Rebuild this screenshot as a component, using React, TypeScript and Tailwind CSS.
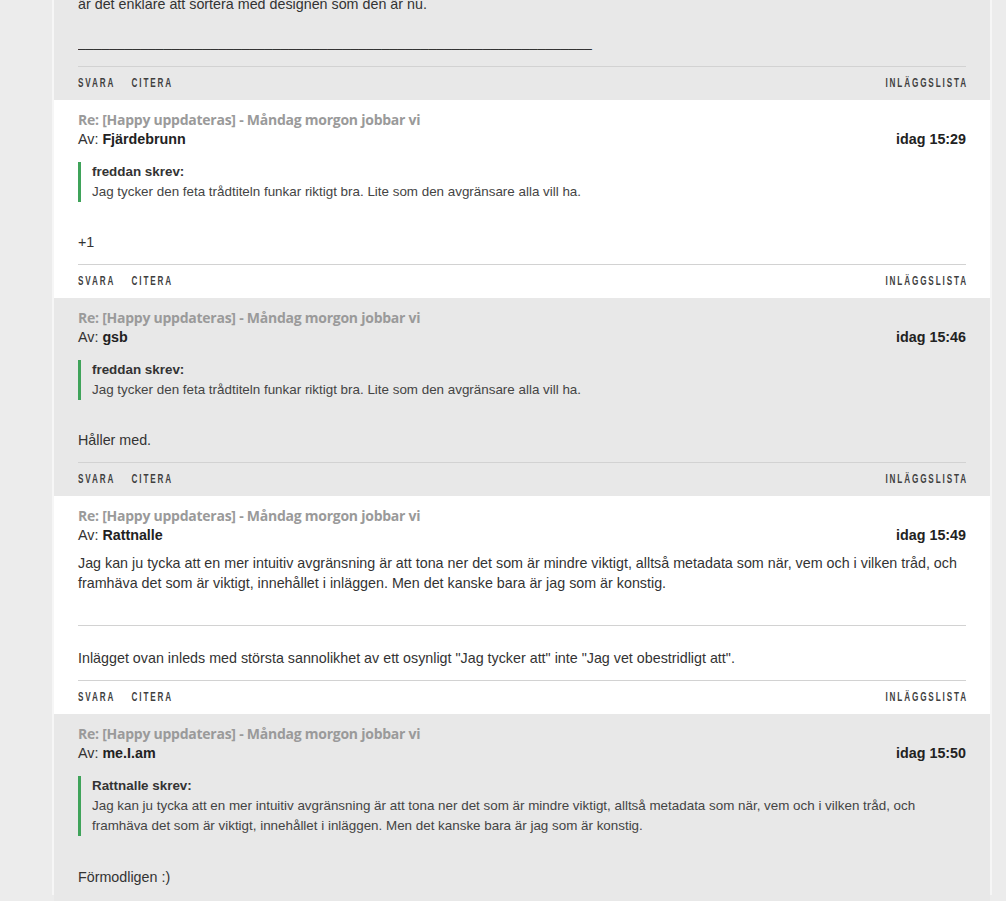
import React from 'react';

const quoteText1 =
  'Jag tycker den feta trådtiteln funkar riktigt bra. Lite som den avgränsare alla vill ha.';
const longText =
  'Jag kan ju tycka att en mer intuitiv avgränsning är att tona ner det som är mindre viktigt, alltså metadata som när, vem och i vilken tråd, och framhäva det som är viktigt, innehållet i inläggen. Men det kanske bara är jag som är konstig.';

function Actions() {
  return (
    <div className="flex justify-between items-center pt-[9px] pb-[10px] leading-[14px] font-['Liberation_Sans',Arial,sans-serif] font-bold text-[12.5px] tracking-[2.9px] text-[#3f3f3f]">
      <div className="flex gap-[25px] origin-left scale-x-[0.65]">
        <span>SVARA</span>
        <span>CITERA</span>
      </div>
      <div className="-mr-[2px] origin-right scale-x-[0.65]">INLÄGGSLISTA</div>
    </div>
  );
}

function Quote({ who, text }: { who: string; text: string }) {
  return (
    <div className="mt-[13px] border-l-[3px] border-[#3fa35a] pl-[11px] text-[13.4px] leading-[20px]">
      <div className="font-bold text-[#333]">{who} skrev:</div>
      <div className="text-[#444]">{text}</div>
    </div>
  );
}

function Post({
  gray,
  author,
  time,
  children,
  actions = true,
}: {
  gray?: boolean;
  author: string;
  time: string;
  children: React.ReactNode;
  actions?: boolean;
}) {
  return (
    <div className={`${gray ? 'bg-[#e8e8e8]' : 'bg-white'} px-6 pt-[11px]`}>
      <div className="font-['Open_Sans',sans-serif] font-bold text-[14px] tracking-[-0.25px] leading-[18px] text-[#9a9a9a]">
        Re: [Happy uppdateras] - Måndag morgon jobbar vi
      </div>
      <div className="flex justify-between text-[14.3px] leading-[20px] text-[#333]">
        <span>
          Av: <b className="text-[#222]">{author}</b>
        </span>
        <b className="text-[#222]">{time}</b>
      </div>
      {children}
      {actions && (
        <>
          <div className="mt-[12px] border-t border-[#d2d2d2]" />
          <Actions />
        </>
      )}
    </div>
  );
}

export default function App() {
  return (
    <div className="h-screen overflow-hidden bg-[#ececec] font-['Liberation_Sans',Arial,sans-serif]">
      <div className="ml-[52px] w-[940px] bg-[#f6f6f6] px-[2px] h-full">
        <div className="bg-[#e8e8e8] px-6 -mt-[6px]">
          <p className="text-[14.3px] leading-[20px] text-[#333]">
            är det enklare att sortera med designen som den är nu.
          </p>
          <p className="mt-[18px] text-[14px] leading-[20px] text-[#333] overflow-hidden whitespace-nowrap">
            __________________________________________________________________
          </p>
          <div className="mt-[14px] border-t border-[#d2d2d2]" />
          <Actions />
        </div>

        <Post author="Fjärdebrunn" time="idag 15:29">
          <Quote who="freddan" text={quoteText1} />
          <p className="mt-[30px] text-[14.3px] leading-[20px] text-[#333]">+1</p>
        </Post>

        <Post gray author="gsb" time="idag 15:46">
          <Quote who="freddan" text={quoteText1} />
          <p className="mt-[30px] text-[14.3px] leading-[20px] text-[#333]">Håller med.</p>
        </Post>

        <Post author="Rattnalle" time="idag 15:49">
          <p className="mt-[8px] text-[14.3px] leading-[20px] text-[#333]">{longText}</p>
          <div className="mt-[32px] border-t border-[#d2d2d2]" />
          <p className="mt-[22px] text-[14.3px] leading-[20px] text-[#333]">
            Inlägget ovan inleds med största sannolikhet av ett osynligt "Jag tycker att" inte "Jag vet obestridligt att".
          </p>
        </Post>

        <Post gray author="me.I.am" time="idag 15:50" actions={false}>
          <Quote who="Rattnalle" text={longText} />
          <p className="mt-[31px] pb-[60px] text-[14.3px] leading-[20px] text-[#333]">Förmodligen :)</p>
        </Post>
      </div>
    </div>
  );
}
